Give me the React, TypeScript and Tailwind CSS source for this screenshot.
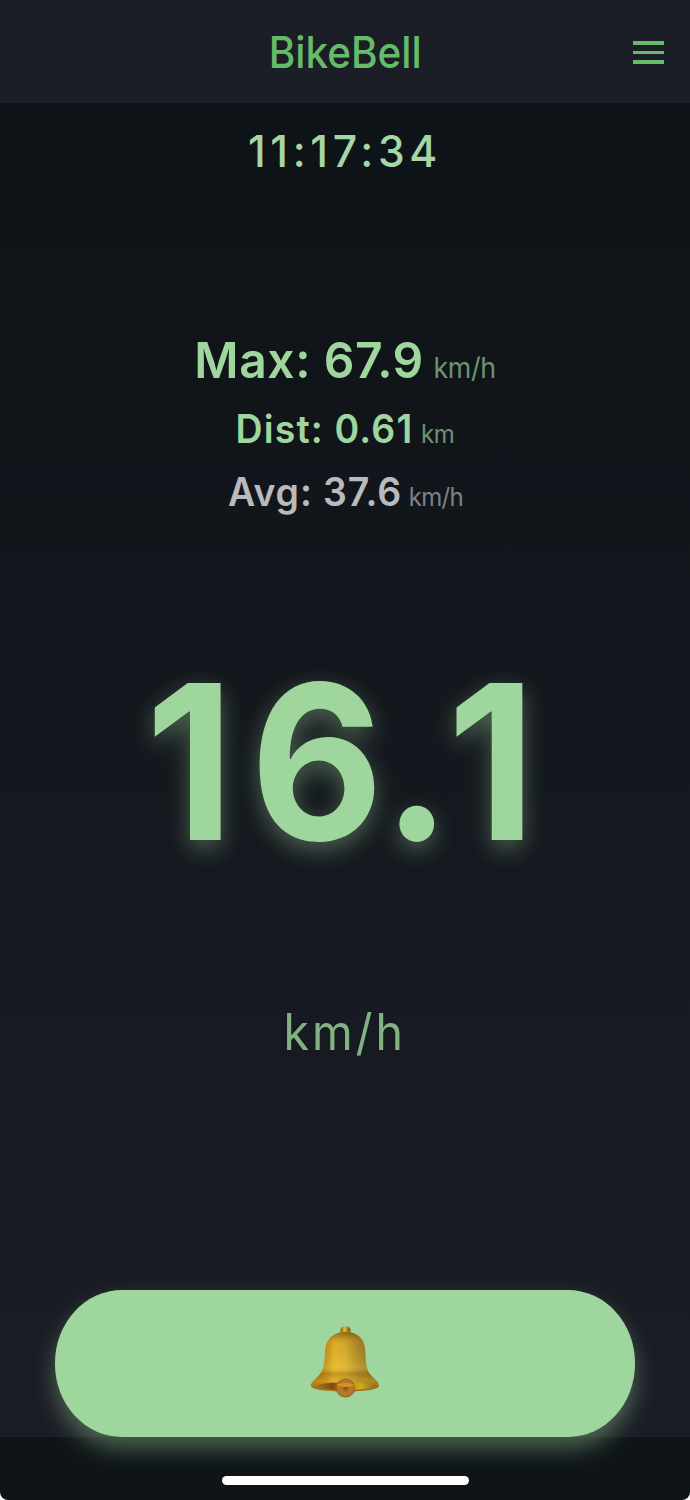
const stats = [
  {
    label: "Max",
    value: "67.9",
    unit: "km/h",
    row: "h-[77px] text-[#9fd69d]",
    valueStyle: "text-[50px] tracking-[0.6px]",
    unitStyle: "text-[28px] ml-[10px] tracking-[-0.4px]",
  },
  {
    label: "Dist",
    value: "0.61",
    unit: "km",
    row: "h-[63px] text-[#9fd69d]",
    valueStyle: "text-[39px] tracking-[1.2px]",
    unitStyle: "text-[25px] ml-[8px] tracking-[-0.5px]",
  },
  {
    label: "Avg",
    value: "37.6",
    unit: "km/h",
    row: "h-[62px] text-[#b9babe]",
    valueStyle: "text-[39px] tracking-[0.9px]",
    unitStyle: "text-[25px] ml-[7px] tracking-[-0.7px]",
  },
]

const BellIcon = () => (
  <svg width="70" height="74" viewBox="0 0 70 74" className="-mt-px" aria-hidden="true">
    <defs>
      <linearGradient id="body" x1="0" x2="1" y1="0" y2="0">
        <stop offset="0" stopColor="#8a5a0c" />
        <stop offset="0.2" stopColor="#b98114" />
        <stop offset="0.34" stopColor="#e2b52c" />
        <stop offset="0.5" stopColor="#d6ae30" />
        <stop offset="0.68" stopColor="#a5862c" />
        <stop offset="0.82" stopColor="#8f7022" />
        <stop offset="1" stopColor="#7a5210" />
      </linearGradient>
      <linearGradient id="shade" x1="0" x2="0" y1="0" y2="1">
        <stop offset="0" stopColor="#6b4708" stopOpacity="0.7" />
        <stop offset="0.2" stopColor="#c08a18" stopOpacity="0.15" />
        <stop offset="0.6" stopColor="#f4d94a" stopOpacity="0.3" />
        <stop offset="0.7" stopColor="#a8741a" stopOpacity="0.45" />
        <stop offset="0.82" stopColor="#d9ac2a" stopOpacity="0.5" />
        <stop offset="1" stopColor="#8c5c10" stopOpacity="0.8" />
      </linearGradient>
      <linearGradient id="mouth" x1="0" x2="1" y1="0" y2="0">
        <stop offset="0" stopColor="#b57a20" />
        <stop offset="0.3" stopColor="#7c4c10" />
        <stop offset="0.5" stopColor="#c87818" />
        <stop offset="0.75" stopColor="#c9b01a" />
        <stop offset="1" stopColor="#8a6614" />
      </linearGradient>
      <radialGradient id="clapper" cx="0.5" cy="0.5" r="0.55">
        <stop offset="0" stopColor="#80501a" />
        <stop offset="0.4" stopColor="#b87630" />
        <stop offset="0.75" stopColor="#b07a24" />
        <stop offset="1" stopColor="#7d5210" />
      </radialGradient>
    </defs>
    <rect x="30.500" y="0.500" width="10" height="10" rx="4" fill="url(#body)" />
    <path
      d="M35.500 6C24 6 17 12 15.500 22C14.500 32 15 39 11.500 46C8 52 1 55 1 60C1 63 16 65.500 35 65.500C54 65.500 69 63 69 60C69 55 62 52 58.500 46C55 39 56 32 55 22C53.500 12 47 6 35.500 6Z"
      fill="url(#body)"
    />
    <path
      d="M35.500 6C24 6 17 12 15.500 22C14.500 32 15 39 11.500 46C8 52 1 55 1 60C1 63 16 65.500 35 65.500C54 65.500 69 63 69 60C69 55 62 52 58.500 46C55 39 56 32 55 22C53.500 12 47 6 35.500 6Z"
      fill="url(#shade)"
    />
    <path d="M3 60C12 57 23 56.500 35 56.500C47 56.500 58 57 67 60C62 63 48 64 35 64C22 64 8 63 3 60Z" fill="url(#mouth)" />
    <circle cx="35.500" cy="62" r="9.500" fill="url(#clapper)" />
    <path d="M26.500 59C28 56.500 43 56.500 44.500 59C42 61.500 29 61.500 26.500 59Z" fill="#dd8d24" />
  </svg>
)

const App = () => {
  return (
    <div className="bg-white w-full h-[1500px] font-['Inter',sans-serif]">
      <div className="h-full flex flex-col overflow-hidden rounded-b-[8px] bg-[#0f1418]">
        <header className="h-[103px] shrink-0 grid grid-cols-[1fr_auto_1fr] items-center bg-[#1b1e26] text-[#66bb6a] px-[26px]">
          <span />
          <h1 className="text-[44px] font-medium whitespace-nowrap scale-x-[0.92]">BikeBell</h1>
          <button className="justify-self-end mt-0.5 flex flex-col gap-[6px]" aria-label="Menu">
            <span className="block w-[31px] h-[3.500px] bg-[#66bb6a]" />
            <span className="block w-[31px] h-[3.500px] bg-[#66bb6a]" />
            <span className="block w-[31px] h-[3.500px] bg-[#66bb6a]" />
          </button>
        </header>
        <main className="h-[1334px] shrink-0 flex flex-col items-center bg-gradient-to-b from-[#0e1317] to-[#1b1d26]">
          <time className="h-[96px] flex items-center text-[44px] font-medium tracking-[4.8px] scale-x-[0.97] text-[#a5d6a7]">
            11:17:34
          </time>
          <section className="mt-[124px] flex flex-col items-center">
            {stats.map((stat) => (
              <p key={stat.label} className={`flex items-baseline whitespace-nowrap scale-x-[0.96] ${stat.row}`}>
                <span className={`font-semibold ${stat.valueStyle}`}>
                  {stat.label}: {stat.value}
                </span>
                <span className={`font-normal opacity-65 ${stat.unitStyle}`}>{stat.unit}</span>
              </p>
            ))}
          </section>
          <p className="mt-[97px] h-[280px] flex items-center pr-[10px] text-[216px] leading-none font-bold scale-x-[0.95] text-[#9fd69d] [text-shadow:0_8px_24px_rgba(159,214,157,0.4)]">
            <span className="tracking-[17px]">1</span>
            <span className="tracking-[-1px]">6</span>
            <span className="tracking-[-4px]">.</span>
            <span>1</span>
          </p>
          <p className="mt-[90px] h-[80px] flex items-center text-[50px] font-normal tracking-[3.2px] scale-x-[0.93] text-[#82b183]">
            km/h
          </p>
          <button
            className="mt-auto w-[580px] h-[147px] shrink-0 flex justify-center items-center rounded-[67px/73px] bg-[#9fd69d] shadow-[0_12px_22px_rgba(159,214,157,0.4)]"
            aria-label="Ring bell"
          >
            <BellIcon />
          </button>
        </main>
        <footer className="flex-1 flex justify-center items-start pt-[39px]">
          <div className="w-[247px] h-[9px] rounded-full bg-white" />
        </footer>
      </div>
    </div>
  )
}

export default App
